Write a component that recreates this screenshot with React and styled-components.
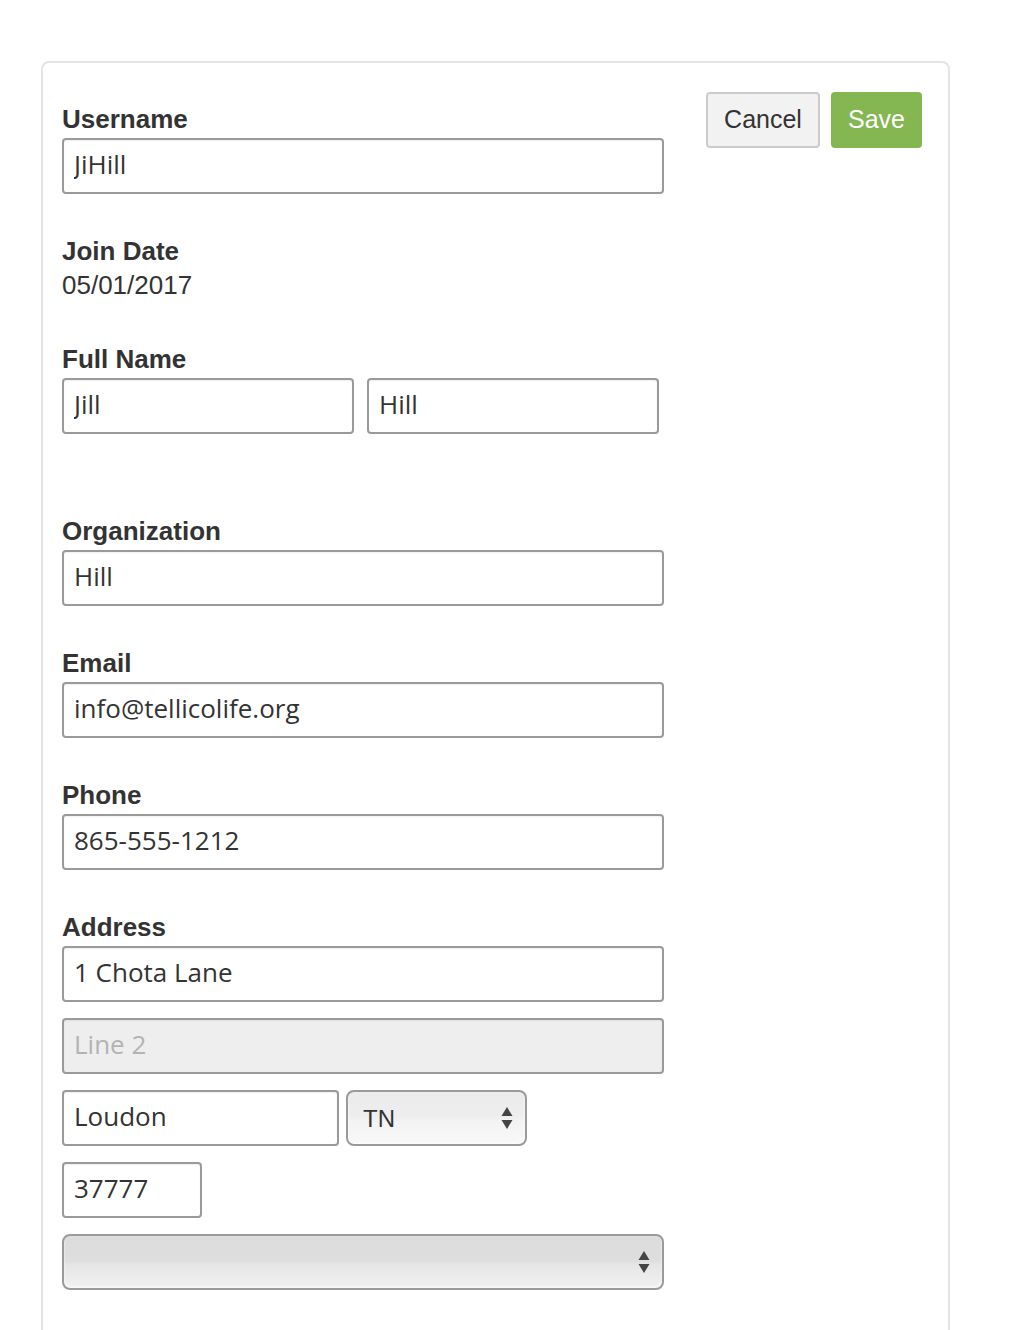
import React from 'react';
import styled, { createGlobalStyle } from 'styled-components';

const GlobalStyle = createGlobalStyle`
  body {
    margin: 0;
    background: #fff;
    font-family: 'Liberation Sans', Arial, sans-serif;
    color: #333;
  }
`;

const Page = styled.div`
  padding: 61px 0 0 41px;
  height: 1330px;
  box-sizing: border-box;
  overflow: hidden;
`;

const Card = styled.section`
  width: 909px;
  min-height: 1400px;
  box-sizing: border-box;
  border: 2px solid #e4e4e4;
  border-radius: 8px;
  padding: 29px 26px 40px 19px;
  display: flex;
  justify-content: space-between;
  align-items: flex-start;
`;

const Form = styled.div`
  width: 602px;
  padding-top: 12px;
  display: flex;
  flex-direction: column;
`;

const Group = styled.div`
  display: flex;
  flex-direction: column;
  gap: ${(p) => p.$gap || 0}px;
  margin-bottom: ${(p) => (p.$after != null ? p.$after : 42)}px;
`;

const Label = styled.label`
  font-size: 26px;
  line-height: 30px;
  font-weight: 700;
  color: #333;
  margin-bottom: ${(p) => (p.$mb != null ? p.$mb : 4)}px;
`;

const Value = styled.div`
  font-size: 26px;
  line-height: 30px;
  color: #333;
`;

const Input = styled.input`
  box-sizing: border-box;
  width: ${(p) => (p.$w ? `${p.$w}px` : '100%')};
  height: 56px;
  border: 2px solid #9a9a9a;
  border-radius: 4px;
  padding: 0 10px 4px;
  font-family: 'Open Sans', 'Liberation Sans', sans-serif;
  font-size: 26px;
  color: #333;
  background: ${(p) => (p.disabled ? '#eeeeee' : '#fff')};
  box-shadow: inset 0 1px 2px rgba(0, 0, 0, 0.06);
  outline: none;

  &::placeholder {
    color: #b3b3b3;
  }
`;

const Row = styled.div`
  display: flex;
  gap: ${(p) => p.$gap}px;
`;

const SelectWrap = styled.div`
  position: relative;
  width: ${(p) => (p.$w ? `${p.$w}px` : '100%')};
  height: 56px;
`;

const Select = styled.select`
  appearance: none;
  -webkit-appearance: none;
  box-sizing: border-box;
  width: 100%;
  height: 100%;
  border: 2px solid #9a9a9a;
  border-radius: 8px;
  padding: 0 15px;
  font-family: 'Liberation Sans', Arial, sans-serif;
  font-size: 24px;
  color: #333;
  background: ${(p) =>
    p.$dark
      ? 'linear-gradient(#dcdcdc 0%, #dedede 48%, #e6e6e6 56%, #f1f1f1 100%)'
      : 'linear-gradient(#ebebeb 0%, #eeeeee 48%, #f3f3f3 56%, #f8f8f8 100%)'};
  box-shadow: inset 0 -1px 3px rgba(255, 255, 255, 0.8);
  outline: none;
`;

const Arrows = styled.svg`
  position: absolute;
  right: 14px;
  top: 50%;
  transform: translateY(-50%);
  pointer-events: none;
`;

const Actions = styled.div`
  display: flex;
  gap: 11px;
`;

const Button = styled.button`
  width: ${(p) => (p.$primary ? 91 : 114)}px;
  height: 56px;
  box-sizing: border-box;
  padding: 0 0 2px;
  border-radius: 4px;
  font-family: 'Liberation Sans', Arial, sans-serif;
  font-size: 25px;
  border: 2px solid ${(p) => (p.$primary ? '#84b752' : '#cccccc')};
  background: ${(p) => (p.$primary ? '#84b752' : '#f2f2f2')};
  color: ${(p) => (p.$primary ? '#fff' : '#333')};
  cursor: pointer;
`;

const UpDown = () => (
  <Arrows width="12" height="24" viewBox="0 0 12 24">
    <path d="M6 1 L11.5 10 L0.5 10 Z" fill="#444" />
    <path d="M6 23 L11.5 14 L0.5 14 Z" fill="#444" />
  </Arrows>
);

const App = () => {
  return (
    <>
      <GlobalStyle />
      <Page>
        <Card>
          <Form>
            <Group>
              <Label>Username</Label>
              <Input defaultValue="JiHill" />
            </Group>
            <Group $after={44}>
              <Label>Join Date</Label>
              <Value>05/01/2017</Value>
            </Group>
            <Group $after={82}>
              <Label>Full Name</Label>
              <Row $gap={13}>
                <Input $w={292} defaultValue="Jill" />
                <Input $w={292} defaultValue="Hill" />
              </Row>
            </Group>
            <Group>
              <Label>Organization</Label>
              <Input defaultValue="Hill" />
            </Group>
            <Group>
              <Label>Email</Label>
              <Input defaultValue="info@tellicolife.org" />
            </Group>
            <Group>
              <Label>Phone</Label>
              <Input defaultValue="865-555-1212" />
            </Group>
            <Group $gap={16} $after={0}>
              <Label $mb={-12}>Address</Label>
              <Input defaultValue="1 Chota Lane" />
              <Input disabled placeholder="Line 2" />
              <Row $gap={7}>
                <Input $w={277} defaultValue="Loudon" />
                <SelectWrap $w={181}>
                  <Select defaultValue="TN">
                    <option value="TN">TN</option>
                  </Select>
                  <UpDown />
                </SelectWrap>
              </Row>
              <Input $w={140} defaultValue="37777" />
              <SelectWrap>
                <Select $dark defaultValue="">
                  <option value=""></option>
                </Select>
                <UpDown />
              </SelectWrap>
            </Group>
          </Form>
          <Actions>
            <Button>Cancel</Button>
            <Button $primary>Save</Button>
          </Actions>
        </Card>
      </Page>
    </>
  );
};

export default App;
